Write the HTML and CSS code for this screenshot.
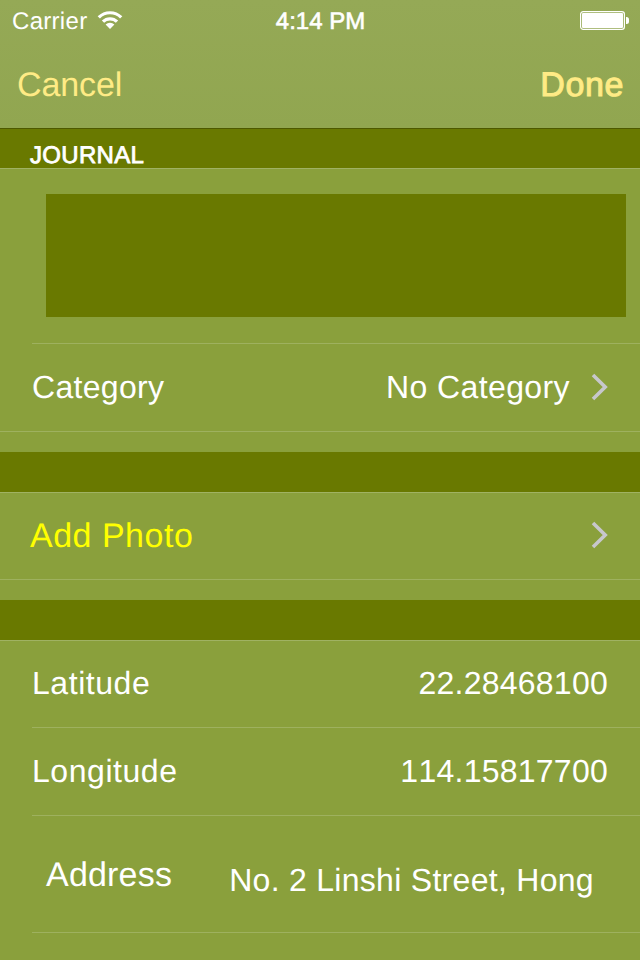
FILE: index.html
```html
<!DOCTYPE html>
<html lang="en">
<head>
<meta charset="utf-8">
<title>Journal Entry</title>
<link rel="stylesheet" href="styles.css">
</head>
<body>
<header class="top">
  <div class="status">
    <div class="carrier"><span>Carrier</span>
      <svg class="wifi" width="26" height="20" viewBox="0 0 26 20"><g fill="none" stroke="#fff" stroke-width="3.2"><path d="M1.8 7.4A15.8 15.8 0 0 1 24.2 7.4"/><path d="M6 11.7A9.9 9.9 0 0 1 20 11.7"/></g><path d="M13 19 8.6 14.6A6.2 6.2 0 0 1 17.4 14.6Z" fill="#fff"/></svg>
    </div>
    <div class="clock">4:14 PM</div>
    <div class="power"><svg width="50" height="20" viewBox="0 0 50 20"><rect x=".6" y=".6" width="43.8" height="17.8" rx="2.6" fill="none" stroke="#fff" stroke-width="1.2"/><rect x="2" y="2" width="41" height="15" rx="1" fill="#fff"/><path d="M46 6h.5a2.5 2.5 0 0 1 2.5 2.5v2a2.5 2.5 0 0 1-2.5 2.5H46z" fill="#fff"/></svg></div>
  </div>
  <nav class="nav"><span class="cancel">Cancel</span><span class="done">Done</span></nav>
</header>
<main>
  <h2 class="heading">JOURNAL</h2>
  <section class="group">
    <div class="row note"><div class="textarea"></div></div>
    <div class="row last"><span class="label">Category</span><span class="value category">No Category</span><svg class="chevron" width="18" height="28" viewBox="0 0 18 28"><path d="M3 2 15.2 14 3 26"/></svg></div>
  </section>
  <section class="group">
    <div class="row last"><span class="action">Add Photo</span><svg class="chevron" width="18" height="28" viewBox="0 0 18 28"><path d="M3 2 15.2 14 3 26"/></svg></div>
  </section>
  <section class="group">
    <div class="row first"><span class="label wide">Latitude</span><span class="value number">22.28468100</span></div>
    <div class="row"><span class="label wide">Longitude</span><span class="value number">114.15817700</span></div>
    <div class="row address"><span class="address-label">Address</span><span class="address-value">No. 2 Linshi Street, Hong</span></div>
  </section>
</main>
</body>
</html>
```
FILE: styles.css
```css
* { box-sizing: border-box; }
body {
  margin: 0;
  width: 640px;
  height: 960px;
  overflow: hidden;
  background: #697900;
  color: #fff;
  font-family: "Liberation Sans", Arial, sans-serif;
  font-size: 32px;
  font-kerning: none;
  text-rendering: geometricPrecision;
  white-space: nowrap;
}
svg { display: block; flex: none; }
.top {
  height: 129px;
  background: linear-gradient(#95a956, #91a650);
  border-bottom: 1px solid #4d5900;
}
.status {
  display: grid;
  grid-template-columns: 1fr auto 1fr;
  height: 40px;
  font-size: 24px;
  line-height: 43px;
}
.carrier { display: flex; padding-left: 12px; letter-spacing: .3px; }
.wifi { margin: 10px 0 0 9.5px; }
.clock { padding-left: 1px; letter-spacing: 0; -webkit-text-stroke: .6px #fff; }
.power { display: flex; justify-content: flex-end; padding: 11px 10px 0 0; }
.nav {
  display: flex;
  justify-content: space-between;
  padding: 0 16px 0 17px;
  height: 88px;
  line-height: 90px;
  font-size: 34px;
  color: #ffeb85;
}
.cancel { letter-spacing: -.1px; }
.done { letter-spacing: .6px; -webkit-text-stroke: 1px #ffeb85; }
.heading {
  margin: 0;
  height: 39px;
  padding: 6px 0 0 30px;
  font-size: 24px;
  font-weight: 400;
  line-height: 42px;
  letter-spacing: .3px;
  -webkit-text-stroke: .8px #fff;
}
.group {
  background: #8aa03c;
  border-top: 1px solid #a0b263;
  padding-bottom: 20px;
  margin-bottom: 40px;
}
.group:last-child { height: 320px; margin-bottom: 0; }
.row {
  display: flex;
  align-items: center;
  height: 88px;
  margin-left: 32px;
  padding-right: 32px;
  border-bottom: 1px solid #9eb15f;
}
.row.last { margin-left: 0; padding-left: 32px; }
.group > .last:first-child { height: 87px; }
.row.first { height: 87px; padding-bottom: 2px; }
.row.note { height: 175px; padding: 25px 14px 26px; align-items: stretch; }
.textarea { flex: 1; background: #697900; }
.label { letter-spacing: .3px; }
.wide { letter-spacing: .55px; }
.value { margin-left: auto; }
.category { letter-spacing: .4px; margin-right: 20px; }
.number { letter-spacing: .25px; }
.chevron { fill: none; stroke: #c7c7cc; stroke-width: 3.6; margin-bottom: 2px; }
.row.last .chevron { margin-left: auto; }
.row.last .category + .chevron { margin-left: 0; }
.action { margin-left: -2px; font-size: 34px; letter-spacing: .5px; color: #ff0; }
.row.address { height: 117px; padding-left: 14px; align-items: baseline; }
.address-label { font-size: 34px; letter-spacing: .2px; line-height: 119px; }
.address-value { margin-left: 57px; letter-spacing: .29px; position: relative; top: 5px; }
```
